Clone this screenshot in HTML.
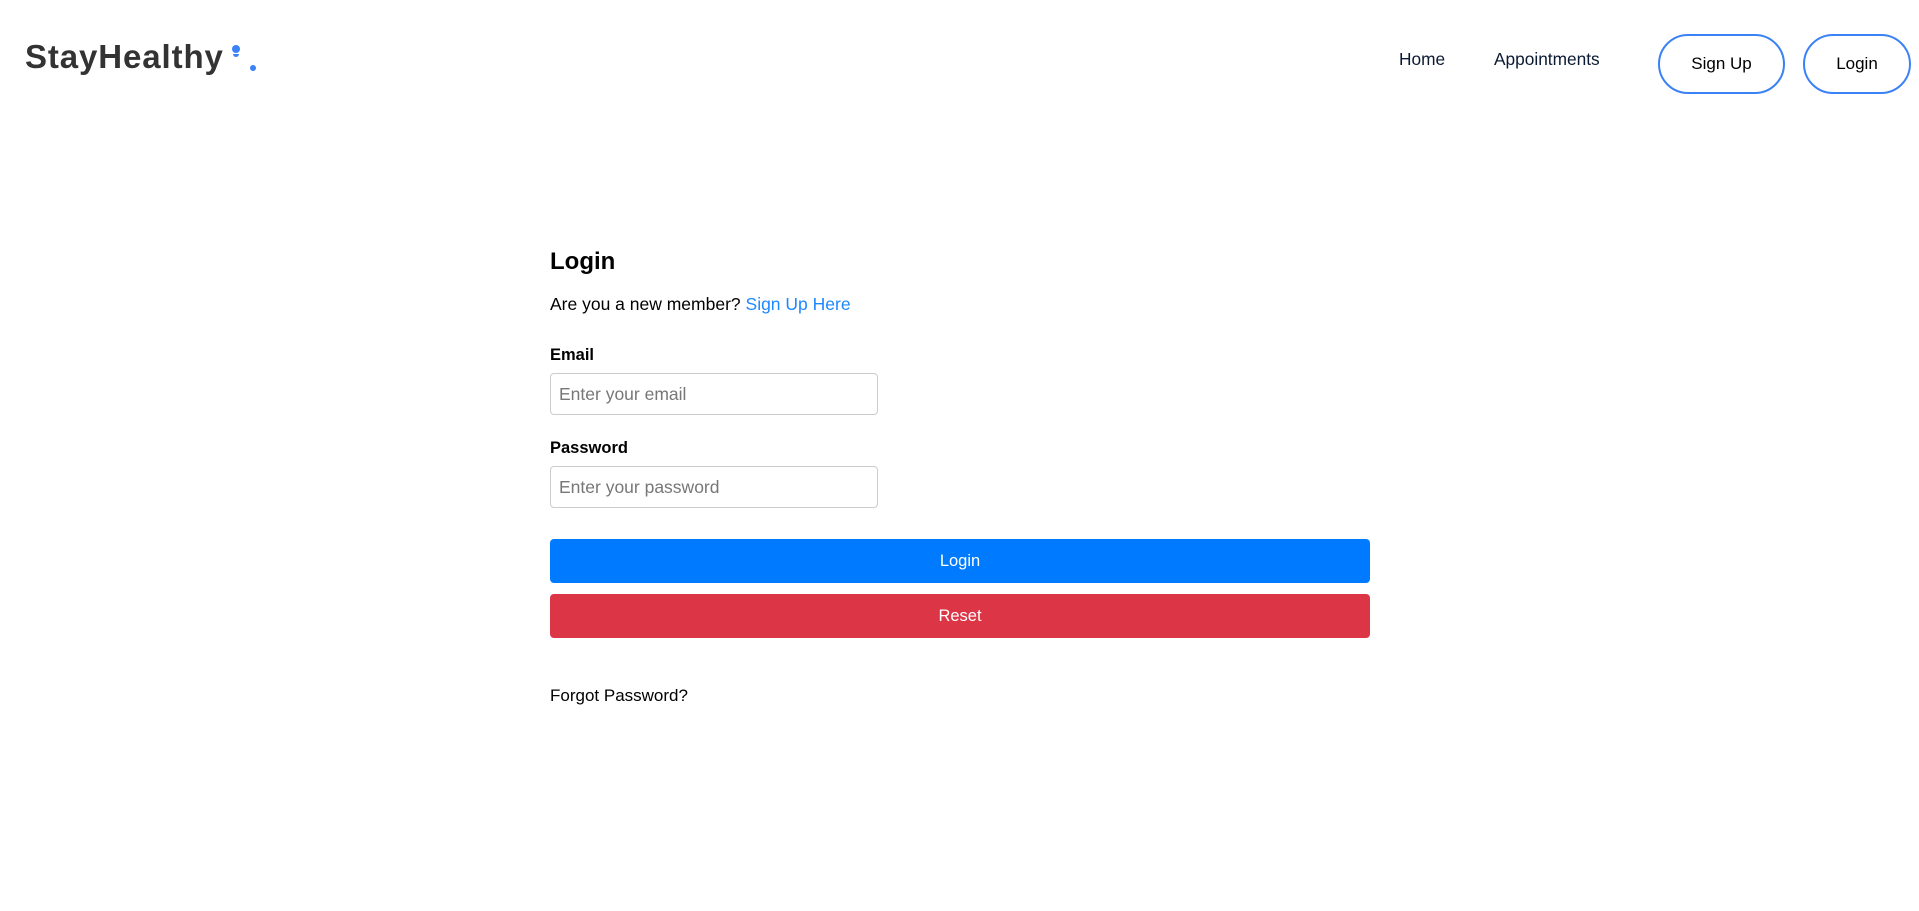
<!DOCTYPE html>
<html><head><style>
body{margin:0;width:1919px;height:911px;background:#fff;font-family:"Liberation Sans",sans-serif;position:relative;overflow:hidden;color:#000}
.a{position:absolute;white-space:nowrap}
.logo{left:25px;top:38px;font-size:33px;font-weight:bold;color:#333;letter-spacing:0.9px}
.dot{position:absolute;background:#3b82f6;border-radius:50%}
.nav{font-size:17.3px;color:#0b1a33;top:49px}
.pill{position:absolute;top:34px;height:56px;border:2px solid #3b82f6;border-radius:30px;font-size:17px;display:flex;align-items:center;justify-content:center;color:#000}
.lbl{font-size:16.5px;font-weight:bold;left:550px}
.inp{position:absolute;left:550px;height:42px;border:1px solid #ccc;border-radius:4px;font-size:17.5px;color:#777;line-height:40px;padding-left:8px;box-sizing:border-box;width:328px}
.btn{position:absolute;left:550px;width:820px;height:44px;border-radius:4px;color:#fff;font-size:16.5px;display:flex;align-items:center;justify-content:center}
</style></head><body>
<div class="a logo">StayHealthy</div>
<div class="dot" style="left:232px;top:45px;width:8px;height:8px"></div>
<div style="position:absolute;left:233px;top:54px;width:6px;height:3px;background:#3b82f6;border-radius:0 0 3px 3px"></div>
<div class="dot" style="left:250px;top:65px;width:6px;height:6px"></div>
<div class="a nav" style="left:1399px">Home</div>
<div class="a nav" style="left:1494px">Appointments</div>
<div class="pill" style="left:1658px;width:123px">Sign Up</div>
<div class="pill" style="left:1803px;width:104px">Login</div>
<div class="a" style="left:550px;top:248px;font-size:24px;font-weight:bold">Login</div>
<div class="a" style="left:550px;top:294px;font-size:17.5px">Are you a new member? <span style="color:#1e88ff">Sign Up Here</span></div>
<div class="a lbl" style="top:346px">Email</div>
<div class="inp" style="top:373px">Enter your email</div>
<div class="a lbl" style="top:439px">Password</div>
<div class="inp" style="top:466px">Enter your password</div>
<div class="btn" style="top:539px;background:#007bff">Login</div>
<div class="btn" style="top:594px;background:#dc3545">Reset</div>
<div class="a" style="left:550px;top:686px;font-size:17px">Forgot Password?</div>
</body></html>
